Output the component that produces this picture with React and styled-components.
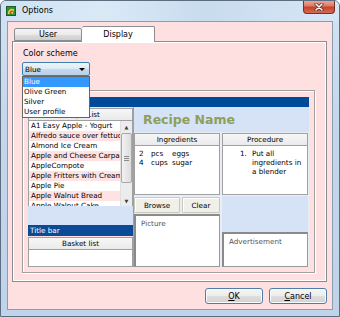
import React from 'react';
import styled, { createGlobalStyle } from 'styled-components';

const GlobalStyle = createGlobalStyle`
  html, body { margin: 0; padding: 0; background: #fff; }
  body { font-family: "DejaVu Sans", Tahoma, sans-serif; font-size: 8px; color: #000; }
`;

const Window = styled.div`
  width: 340px;
  height: 317px;
  box-sizing: border-box;
  display: flex;
  flex-direction: column;
  background: linear-gradient(180deg, #d3e3f3 0%, #c2d7ec 40%, #bfd4ea 100%);
  border: 1px solid #5d6d80;
  border-radius: 6px 6px 0 0;
  overflow: hidden;
`;

const TitleBar = styled.div`
  height: 20px;
  display: flex;
  align-items: flex-start;
  padding-left: 5px;
  background: linear-gradient(90deg, #cfe1f3 0%, #dbe9f6 30%, #c8dcef 60%, #d6e6f5 100%);
`;

const AppIcon = styled.svg`
  width: 10px;
  height: 10px;
  margin-top: 5px;
  flex: none;
`;

const Caption = styled.div`
  margin-left: 6px;
  margin-top: 4px;
  font-size: 8px;
  line-height: 12px;
  color: #000;
`;

const CloseButton = styled.div`
  margin-left: auto;
  margin-right: 4px;
  margin-top: -1px;
  width: 32px;
  height: 14px;
  box-sizing: border-box;
  border: 1px solid #7a2e24;
  border-top: none;
  border-radius: 0 0 4px 4px;
  background: linear-gradient(180deg, #eab0a4 0%, #dd7a68 45%, #c8412c 55%, #d86a52 100%);
  display: flex;
  align-items: center;
  justify-content: center;
`;

const Client = styled.div`
  flex: 1;
  margin: 0 6px 6px 6px;
  box-sizing: border-box;
  background: #ffe0e0;
  border: 1px solid #8d9db0;
  display: flex;
  flex-direction: column;
  padding: 4px 5px 5px 4px;
`;

const TabStrip = styled.div`
  height: 15px;
  display: flex;
  align-items: flex-end;
  padding-left: 2px;
`;

const Tab = styled.div`
  box-sizing: border-box;
  width: ${p => (p.$active ? 73 : 68)}px;
  height: ${p => (p.$active ? 16 : 13)}px;
  margin-bottom: ${p => (p.$active ? -1 : 0)}px;
  position: relative;
  z-index: ${p => (p.$active ? 2 : 1)};
  border: 1px solid #898c95;
  border-bottom: ${p => (p.$active ? 'none' : '1px solid #898c95')};
  border-left: ${p => (p.$active ? 'none' : '1px solid #898c95')};
  border-radius: 2px 2px 0 0;
  background: ${p => (p.$active ? '#ffffff' : 'linear-gradient(180deg, #f4f4f4 0%, #ebebeb 50%, #dddddd 51%, #cfcfcf 100%)')};
  display: flex;
  align-items: center;
  justify-content: center;
  font-size: 8px;
  line-height: 10px;
  padding-top: ${p => (p.$active ? 0 : 1)}px;
`;

const TabPanel = styled.div`
  height: 241px;
  box-sizing: border-box;
  border: 1px solid #898c95;
  box-shadow: inset 1px 1px 0 #ffffff, inset -1px -1px 0 #ffffff;
  padding: 6px 11px 8px 9px;
  display: flex;
  flex-direction: column;
`;

const Label = styled.div`
  margin-left: 1px;
  font-size: 8px;
  line-height: 11px;
  height: 11px;
`;

const SelectWrap = styled.div`
  position: relative;
  margin-top: 3px;
  width: 68px;
  z-index: 5;
`;

const SelectBox = styled.div`
  height: 14px;
  box-sizing: border-box;
  border: 1px solid #3c7fb1;
  border-radius: 2px;
  background: linear-gradient(180deg, #eef5fb 0%, #dde9f5 50%, #c6d9ee 51%, #b7cfe8 100%);
  display: flex;
  align-items: center;
  padding-left: 2px;
  font-size: 7.2px;
`;

const Arrow = styled.div`
  margin-left: auto;
  margin-right: 4px;
  width: 0;
  height: 0;
  border-left: 3px solid transparent;
  border-right: 3px solid transparent;
  border-top: 3px solid #000;
`;

const DropList = styled.div`
  position: absolute;
  top: 100%;
  left: 0;
  width: 68px;
  box-sizing: border-box;
  border: 1px solid #646464;
  background: #fff;
`;

const DropItem = styled.div`
  height: 10px;
  line-height: 10px;
  padding-left: 1px;
  font-size: 7.2px;
  background: ${p => (p.$selected ? '#3399ff' : '#fff')};
  color: ${p => (p.$selected ? '#fff' : '#000')};
`;

const GroupBox = styled.div`
  margin-top: 14px;
  height: 183px;
  box-sizing: border-box;
  border: 1px solid #a0a0a0;
  box-shadow: inset 1px 1px 0 #fff, 1px 1px 0 #fff;
  padding: 6px 5px 5px 5px;
  display: flex;
  flex-direction: column;
`;

const Preview = styled.div`
  flex: 1;
  display: flex;
  flex-direction: column;
  font-size: 7.2px;
`;

const TopBar = styled.div`
  height: 10px;
  background: #004b99;
`;

const PreviewBody = styled.div`
  flex: 1;
  display: flex;
`;

const LeftCol = styled.div`
  width: 105px;
  display: flex;
  flex-direction: column;
`;

const HeaderCell = styled.div`
  height: 13px;
  box-sizing: border-box;
  margin-top: 1px;
  border: 1px solid #a0a0a0;
  background: linear-gradient(180deg, #f7f7f7 0%, #eaeaea 100%);
  display: flex;
  align-items: center;
  justify-content: center;
  font-size: 7.2px;
`;

const ListArea = styled.div`
  height: 85px;
  display: flex;
  border-left: 1px solid #a0a0a0;
  border-right: 1px solid #a0a0a0;
  background: #fff;
  overflow: hidden;
`;

const Rows = styled.div`
  flex: 1;
  overflow: hidden;
`;

const Row = styled.div`
  height: 10px;
  line-height: 10px;
  padding-left: 2px;
  white-space: nowrap;
  overflow: hidden;
  background: ${p => (p.$odd ? '#ffe2e2' : '#ffffff')};
`;

const ScrollBar = styled.div`
  width: 11px;
  display: flex;
  flex-direction: column;
  background: #ececec;
  border-left: 1px solid #e0e0e0;
`;

const ScrollArrow = styled.div`
  height: 11px;
  display: flex;
  align-items: center;
  justify-content: center;
  font-size: 5px;
  color: #404040;
`;

const Thumb = styled.div`
  height: 50px;
  margin: 1px 0 0 0;
  box-sizing: border-box;
  border: 1px solid #a8a8a8;
  border-radius: 2px;
  background: linear-gradient(90deg, #f2f2f2 0%, #dcdcdc 100%);
  display: flex;
  flex-direction: column;
  align-items: center;
  justify-content: center;
  gap: 1px;
`;

const Grip = styled.div`
  width: 5px;
  height: 1px;
  background: #8a8a8a;
`;

const ScrollGap = styled.div`
  flex: 1;
`;

const BlueFill = styled.div`
  height: ${p => p.$h}px;
  margin-top: ${p => p.$mt || 0}px;
  background: #d6e3f6;
`;

const TitleStrip = styled.div`
  height: 11px;
  line-height: 11px;
  background: #0b4a97;
  color: #fff;
  padding-left: 2px;
`;

const WhiteBody = styled.div`
  flex: 1;
  background: #fff;
  border: 1px solid #a0a0a0;
  border-top: none;
`;

const RightCol = styled.div`
  flex: 1;
  display: flex;
  flex-direction: column;
  background: #e9eef6;
  border-left: 1px solid #a0a0a0;
`;

const NameBand = styled.div`
  height: 25px;
  background: #d6e3f6;
  padding-left: 9px;
  display: flex;
  align-items: center;
  font-family: "DejaVu Sans", Verdana, sans-serif;
  font-weight: bold;
  font-size: 12.5px;
  color: #8c9f5c;
`;

const Columns = styled.div`
  flex: 1;
  display: flex;
  gap: 2px;
  padding-right: 1px;
`;

const SubCol = styled.div`
  width: 86px;
  display: flex;
  flex-direction: column;
`;

const Content = styled.div`
  height: 49px;
  box-sizing: border-box;
  background: #fff;
  border: 1px solid #a0a0a0;
  border-top: none;
  padding: 3px 3px 0 4px;
  line-height: 9px;
`;

const IngRow = styled.div`
  display: grid;
  grid-template-columns: 12px 21px auto;
`;

const ProcList = styled.div`
  display: flex;
  padding-left: 13px;
`;

const ProcNum = styled.div`
  width: 12px;
  flex: none;
`;

const ButtonRow = styled.div`
  margin-top: 2px;
  display: flex;
  gap: 2px;
`;

const SmallButton = styled.div`
  height: 16px;
  width: ${p => p.$w}px;
  box-sizing: border-box;
  border: 1px solid #c9c8bf;
  border-radius: 1px;
  background: #f0efe8;
  box-shadow: inset 1px 1px 0 #fff;
  display: flex;
  align-items: center;
  justify-content: center;
`;

const Box = styled.div`
  flex: 1;
  margin-top: ${p => p.$mt || 0}px;
  background: #fff;
  border: 1px solid #9a9a9a;
  border-top: 2px solid #8a8a8a;
  border-left: 2px solid #8a8a8a;
  padding: 3px 0 0 5px;
  color: #555;
`;

const Footer = styled.div`
  margin-top: 6px;
  display: flex;
  justify-content: flex-end;
  gap: 6px;
`;

const DialogButton = styled.div`
  width: 58px;
  height: 16px;
  box-sizing: border-box;
  border: 1px solid #4f7fa8;
  border-radius: 3px;
  background: linear-gradient(180deg, #f6f6f6 0%, #ececec 50%, #dedede 51%, #d2d2d2 100%);
  box-shadow: inset 0 0 0 1px #f8fbfe;
  display: flex;
  align-items: center;
  justify-content: center;
  font-size: 8px;
  u { text-decoration: underline; }
`;

const recipes = [
  'A1 Easy Apple - Yogurt',
  'Alfredo sauce over fettuccine',
  'Almond Ice Cream',
  'Apple and Cheese Carpaccio',
  'AppleCompote',
  'Apple Fritters with Cream',
  'Apple Pie',
  'Apple Walnut Bread',
  'Apple Walnut Cake',
];

const schemes = ['Blue', 'Olive Green', 'Silver', 'User profile'];

export default function App() {
  return (
    <>
      <GlobalStyle />
      <Window>
        <TitleBar>
          <AppIcon viewBox="0 0 10 10">
            <rect x="0.5" y="0.5" width="9" height="9" fill="#2f8f35" stroke="#1c5e22" />
            <path d="M2 8 A4 4 0 0 1 8 3.5 L8 8 Z" fill="#f1cf3b" />
            <path d="M3.5 8 A2.6 2.6 0 0 1 8 5.5 L8 8 Z" fill="#e04a2a" />
            <circle cx="6.3" cy="6.8" r="0.9" fill="#f7e27a" />
          </AppIcon>
          <Caption>Options</Caption>
          <CloseButton>
            <svg width="10" height="8" viewBox="0 0 10 8">
              <path d="M2 1 L8 7 M8 1 L2 7" stroke="#5a1a12" strokeWidth="3" strokeLinecap="round" />
              <path d="M2 1 L8 7 M8 1 L2 7" stroke="#fff" strokeWidth="1.6" strokeLinecap="round" />
            </svg>
          </CloseButton>
        </TitleBar>
        <Client>
          <TabStrip>
            <Tab>User</Tab>
            <Tab $active>Display</Tab>
          </TabStrip>
          <TabPanel>
            <Label>Color scheme</Label>
            <SelectWrap>
              <SelectBox>
                Blue
                <Arrow />
              </SelectBox>
              <DropList>
                {schemes.map((s, i) => (
                  <DropItem key={s} $selected={i === 0}>{s}</DropItem>
                ))}
              </DropList>
            </SelectWrap>
            <GroupBox>
              <Preview>
                <TopBar />
                <PreviewBody>
                  <LeftCol>
                    <HeaderCell>Recipe List</HeaderCell>
                    <ListArea>
                      <Rows>
                        {recipes.map((r, i) => (
                          <Row key={r} $odd={i % 2 === 1}>{r}</Row>
                        ))}
                      </Rows>
                      <ScrollBar>
                        <ScrollArrow>▲</ScrollArrow>
                        <Thumb>
                          <Grip />
                          <Grip />
                          <Grip />
                        </Thumb>
                        <ScrollGap />
                        <ScrollArrow>▼</ScrollArrow>
                      </ScrollBar>
                    </ListArea>
                    <BlueFill $h={19} />
                    <TitleStrip>Title bar</TitleStrip>
                    <HeaderCell>Basket list</HeaderCell>
                    <WhiteBody />
                  </LeftCol>
                  <RightCol>
                    <NameBand>Recipe Name</NameBand>
                    <Columns>
                      <SubCol>
                        <HeaderCell>Ingredients</HeaderCell>
                        <Content>
                          <IngRow><span>2</span><span>pcs</span><span>eggs</span></IngRow>
                          <IngRow><span>4</span><span>cups</span><span>sugar</span></IngRow>
                        </Content>
                        <ButtonRow>
                          <SmallButton $w={46}>Browse</SmallButton>
                          <SmallButton $w={38}>Clear</SmallButton>
                        </ButtonRow>
                        <Box $mt={1}>Picture</Box>
                      </SubCol>
                      <SubCol>
                        <HeaderCell>Procedure</HeaderCell>
                        <Content>
                          <ProcList>
                            <ProcNum>1.</ProcNum>
                            <div>Put all ingredients in a blender</div>
                          </ProcList>
                        </Content>
                        <BlueFill $h={36} $mt={1} />
                        <Box>Advertisement</Box>
                      </SubCol>
                    </Columns>
                  </RightCol>
                </PreviewBody>
              </Preview>
            </GroupBox>
          </TabPanel>
          <Footer>
            <DialogButton><u>O</u>K</DialogButton>
            <DialogButton><u>C</u>ancel</DialogButton>
          </Footer>
        </Client>
      </Window>
    </>
  );
}
